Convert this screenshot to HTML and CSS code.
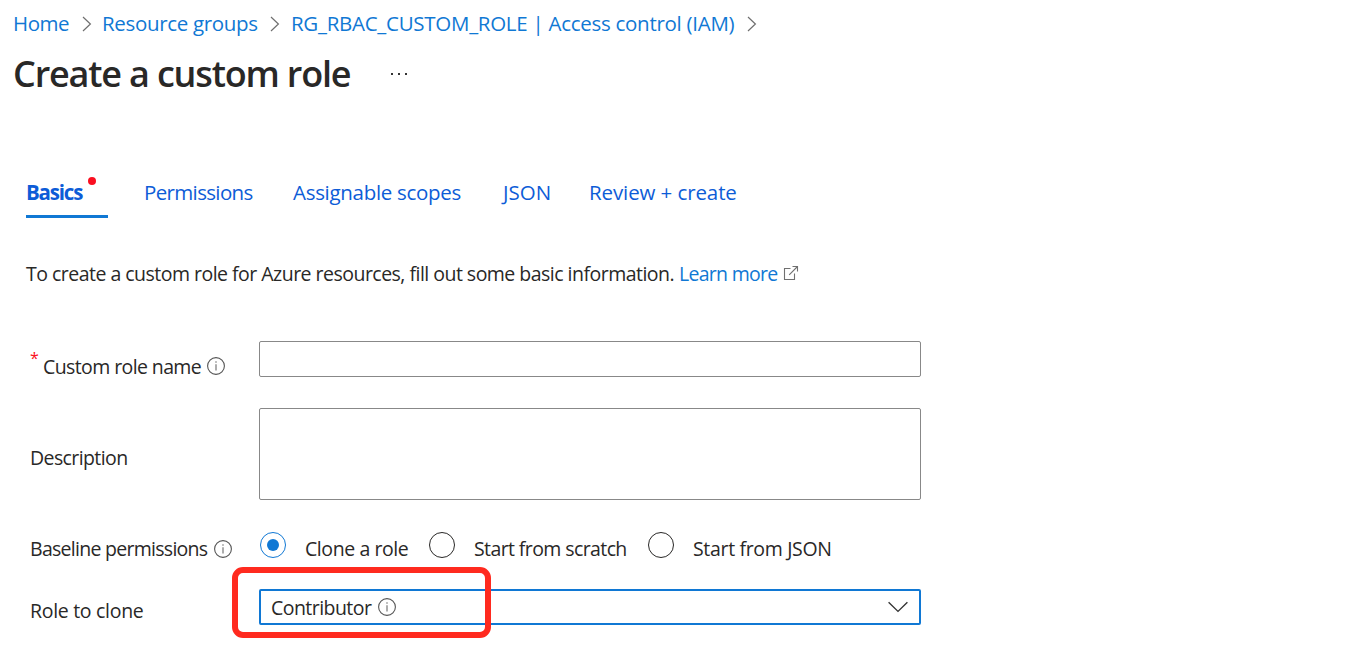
FILE: index.html
```html
<!DOCTYPE html>
<html lang="en">
<head>
<meta charset="utf-8">
<title>Create a custom role</title>
<link rel="stylesheet" href="styles.css">
</head>
<body>
<svg class="defs" width="0" height="0" aria-hidden="true">
  <symbol id="sep" viewBox="0 0 10 16"><path d="M1 1l7.4 7L1 15" fill="none" stroke="#6f6f6f" stroke-width="1.2"/></symbol>
  <symbol id="info" viewBox="0 0 18 18"><circle cx="9" cy="9" r="8.4" fill="none" stroke="#555" stroke-width="1.1"/><path d="M9 7.2v6.3M9 4.3v1.5" stroke="#777" stroke-width="1.2"/></symbol>
</svg>

<nav class="breadcrumb">
  <a class="crumb crumb-home">Home</a>
  <svg class="sep"><use href="#sep"/></svg>
  <a class="crumb crumb-groups">Resource groups</a>
  <svg class="sep"><use href="#sep"/></svg>
  <a class="crumb crumb-iam">RG_RBAC_CUSTOM_ROLE | Access control (IAM)</a>
  <svg class="sep"><use href="#sep"/></svg>
</nav>

<header class="title-bar">
  <h1 class="title">Create a custom role</h1>
  <svg class="more" viewBox="0 0 18 4"><path d="M1 1h2v2H1zM8 1h2v2H8zM15 1h2v2h-2z" fill="#333"/></svg>
</header>

<div class="tabs">
  <a class="tab tab-basics">Basics<span class="dot"></span></a>
  <a class="tab tab-permissions">Permissions</a>
  <a class="tab tab-scopes">Assignable scopes</a>
  <a class="tab tab-json">JSON</a>
  <a class="tab tab-review">Review + create</a>
</div>

<p class="intro"><span class="intro-text">To create a custom role for Azure resources, fill out some basic information.</span><a class="learn">Learn more</a><svg class="external" viewBox="0 0 16 16"><path d="M7.500 3.500H1.500v11h10V8.500M9.500 1.500h5v5M14.500 1.500L6.200 9.800" fill="none" stroke="#707070" stroke-width="1.1"/></svg></p>

<form class="form">
  <div class="label label-name"><span class="star">*</span><span class="name-text">Custom role name</span><svg class="info"><use href="#info"/></svg></div>
  <input class="field" type="text">

  <div class="label label-desc">Description</div>
  <textarea class="field area"></textarea>

  <div class="label label-base"><span class="base-text">Baseline permissions</span><svg class="info"><use href="#info"/></svg></div>
  <div class="radios">
    <span class="radio radio-on"></span><span class="option option-clone">Clone a role</span>
    <span class="radio"></span><span class="option option-scratch">Start from scratch</span>
    <span class="radio"></span><span class="option option-json">Start from JSON</span>
  </div>

  <div class="label label-role">Role to clone</div>
  <div class="select">
    <span class="value">Contributor</span><svg class="info"><use href="#info"/></svg>
    <svg class="chevron" viewBox="0 0 20 12"><path d="M.6 1.300L10 10.400l9.400-9.100" fill="none" stroke="#333" stroke-width="1.400"/></svg>
    <span class="highlight"></span>
  </div>
</form>
</body>
</html>
```

FILE: styles.css
```css
* { box-sizing: border-box; }
body {
  margin: 0;
  height: 654px;
  overflow: hidden;
  background: #fff;
  color: #292827;
  font: 19.5px/30px "Open Sans", "Noto Sans", sans-serif;
}
svg { flex: none; display: block; }
.defs { position: absolute; }

.breadcrumb {
  display: flex;
  align-items: center;
  height: 30px;
  margin-top: 8px;
  padding-left: 13px;
  font-size: 20.5px;
  letter-spacing: -0.28px;
}
.crumb { color: #1078d4; white-space: nowrap; flex: none; }
.crumb-home { width: 69px; letter-spacing: -0.45px; }
.crumb-groups { width: 168px; letter-spacing: -0.33px; }
.crumb-iam { width: 456px; }
.sep { width: 10px; height: 16px; margin-top: 1px; }
.sep + .crumb { margin-left: 11px; }
.sep + .crumb-groups { margin-left: 10px; }

.title-bar {
  display: flex;
  align-items: center;
  height: 38px;
  margin-top: 17px;
  padding-left: 13px;
}
.title {
  width: 377px;
  margin: 0;
  font-size: 36px;
  line-height: 38px;
  font-weight: 600;
  letter-spacing: -1.18px;
  white-space: nowrap;
}
.more { width: 18px; height: 4px; }

.tabs {
  display: flex;
  height: 41px;
  margin: 84px 0 0 26px;
  color: #0d5cd7;
  font-size: 20.5px;
}
.tab { flex: none; white-space: nowrap; }
.tab-basics {
  position: relative;
  width: 82px;
  margin-right: 36px;
  border-bottom: 3px solid #1078d4;
  font-weight: 700;
  letter-spacing: -1.2px;
}
.dot {
  position: absolute;
  left: 62px;
  top: 0;
  width: 8px;
  height: 8px;
  border-radius: 50%;
  background: #fa0f20;
}
.tab-permissions { width: 149px; letter-spacing: -0.65px; }
.tab-scopes { width: 208px; letter-spacing: -0.3px; }
.tab-json { width: 88px; padding-left: 2px; }
.tab-review { letter-spacing: -0.1px; }

.intro { display: flex; align-items: center; margin: 41px 0 0 26px; white-space: nowrap; }
.intro-text { width: 653px; letter-spacing: -0.52px; }
.learn { width: 104px; color: #1078d4; letter-spacing: -0.72px; }
.external { width: 16px; height: 16px; margin-top: -2px; }

.form {
  display: grid;
  grid-template-columns: 229px 662px;
  grid-template-rows: 36px 92px 26px 36px;
  row-gap: 31px;
  margin: 52px 0 0 30px;
}
.label { display: flex; align-items: center; height: 30px; white-space: nowrap; }
.label-name { margin-top: 11px; }
.star { width: 13px; height: 30px; line-height: 12px; color: #fa0f20; font-size: 16px; }
.name-text { width: 164px; letter-spacing: -0.6px; }
.label-name .info { margin-top: -2px; }
.label-desc { margin-top: 35px; letter-spacing: -0.6px; }
.label-base { margin-top: 3px; }
.label-base .info { margin-top: -1px; }
.base-text { width: 184px; letter-spacing: -0.72px; }
.label-role { margin-top: 8px; letter-spacing: -0.3px; }
.info { width: 18px; height: 18px; }
.field {
  width: 662px;
  height: 36px;
  margin: 0;
  border: 1px solid #888;
  border-radius: 2px;
  background: #fff;
  outline: none;
  resize: none;
}
.area { height: 92px; }

.radios { display: flex; margin-top: 1px; white-space: nowrap; padding-left: 1px; }
.radio {
  flex: none;
  display: flex;
  align-items: center;
  justify-content: center;
  width: 26px;
  height: 26px;
  border: 1px solid #292827;
  border-radius: 50%;
}
.radio-on { border-color: #1078d4; }
.radio-on::after { content: ""; width: 12px; height: 12px; border-radius: 50%; background: #1078d4; }
.option { flex: none; margin: 2px 0 0 19px; }
.option-clone { width: 124px; letter-spacing: -0.42px; }
.option-scratch { width: 174px; letter-spacing: -0.6px; }
.option-json { letter-spacing: -0.33px; }

.select {
  position: relative;
  display: flex;
  align-items: center;
  width: 662px;
  height: 36px;
  margin-top: 1px;
  padding: 0 11px 0 10px;
  border: 2px solid #1078d4;
  border-radius: 2px;
}
.value { width: 107px; margin-top: 2px; letter-spacing: -0.55px; }
.chevron { width: 20px; height: 12px; margin-left: auto; }
.highlight {
  position: absolute;
  left: -29px;
  top: -24px;
  width: 259px;
  height: 71px;
  border: 6px solid #ff2a1f;
  border-radius: 11px;
}
```
